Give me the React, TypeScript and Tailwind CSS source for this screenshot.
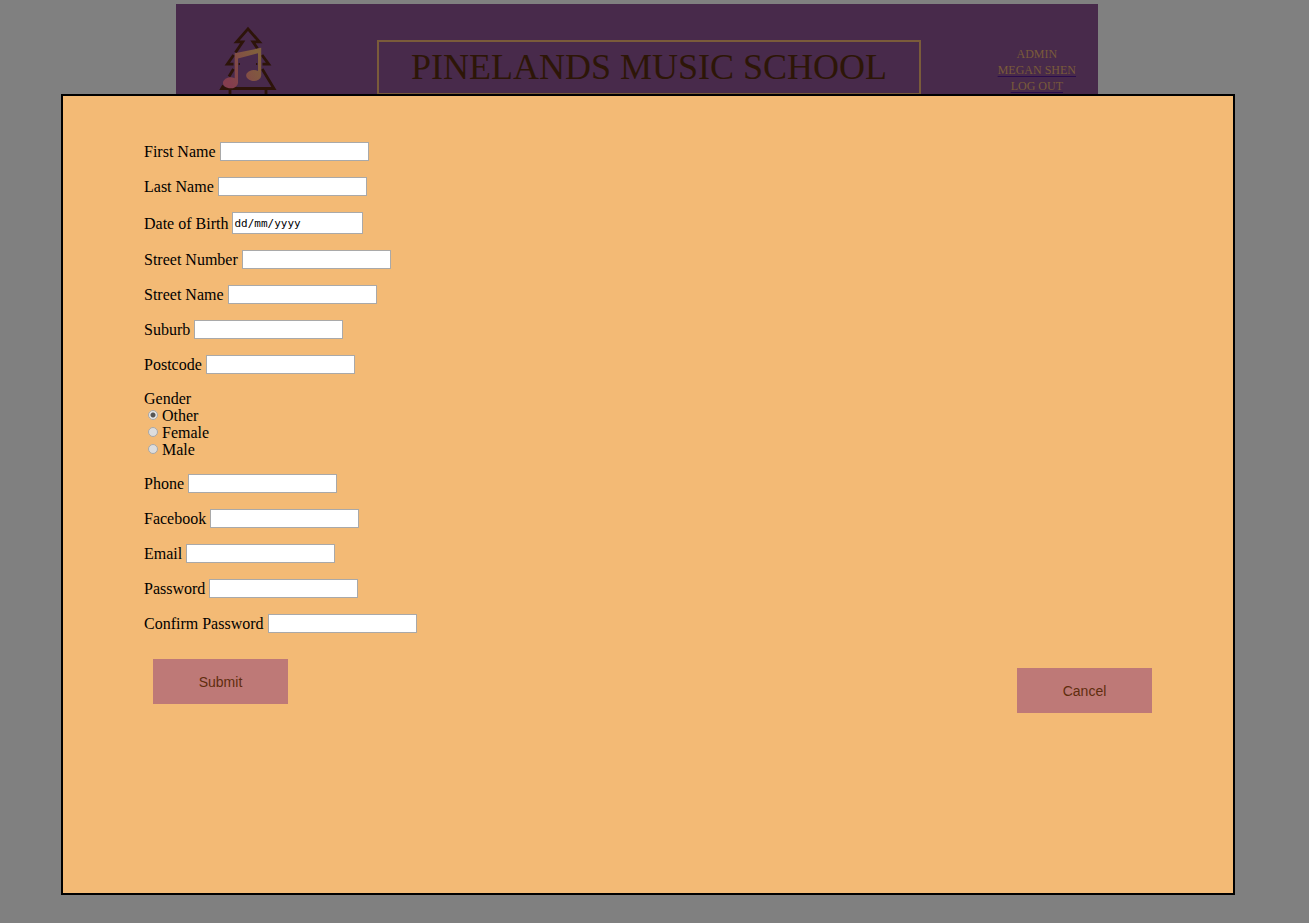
import React from "react";

const addressFields = ["Street Number", "Street Name", "Suburb", "Postcode"];
const accountFields = ["Phone", "Facebook", "Email", "Password", "Confirm Password"];
const genders = ["Other", "Female", "Male"];

function Field({ label }: { label: string }) {
  const id = label.toLowerCase().replace(/ /g, "-");
  return (
    <div className="flex h-[19px] items-center gap-1">
      <label htmlFor={id}>{label}</label>
      <input
        id={id}
        type={label.includes("Password") ? "password" : "text"}
        className="h-full w-[149px] border border-[#a9a9a9] bg-white px-0.5 text-xs"
      />
    </div>
  );
}

function Logo() {
  return (
    <svg className="h-20 w-[58px] shrink-0" viewBox="0 0 58 80" fill="none" aria-hidden="true">
      <defs>
        <linearGradient id="note" gradientUnits="userSpaceOnUse" x1="8" y1="52" x2="42" y2="34">
          <stop offset="0" stopColor="#843d4e" />
          <stop offset="1" stopColor="#80603c" />
        </linearGradient>
      </defs>
      <g stroke="#2d1409" strokeWidth="2.8">
        <path d="M16.5 26.5 23.7 15.9H17.6L29 2.9 40.4 15.9H34L38.5 22.5" />
        <path d="M14.7 29 8.3 38.2H14.5M43 29 49.7 38.2H43.5" />
        <path d="M14.5 43 10 50.5M43.2 43 55 62.5H2.7L4.5 59.5M11 63V80M47 63V80" />
      </g>
      <path
        fill="url(#note)"
        d="M15.7 27.3 42.2 21.8V49.5A7.5 5.5 0 1 1 39 45V27.2L19 32.5V57A7.5 5.5 0 1 1 15.7 52.3Z"
      />
      <path fill="#2d1409" d="M19.7 37h1.3v2h-1.3zM37 37h1.3v2h-1.3z" />
    </svg>
  );
}

export default function App() {
  return (
    <div className="min-h-screen bg-[#808080] pt-1 pr-[211px] pl-[176px] font-['Liberation_Serif',serif]">
      <header className="flex h-[130px] items-start bg-[#482a4b] pr-[22px] pl-[43px]">
        <div className="pt-[22px]">
          <Logo />
        </div>
        <h1 className="mt-9 ml-[100px] h-[55px] border-2 border-[#7a5b3a] px-8 text-center text-[36px] leading-[50px] whitespace-nowrap text-[#2d1607]">
          PINELANDS MUSIC SCHOOL
        </h1>
        <nav className="mt-[42px] ml-auto flex flex-col items-center text-xs leading-4 whitespace-nowrap text-[#7a5b3a]">
          <span>ADMIN</span>
          <a href="#profile" className="underline decoration-[#2a0d4c] underline-offset-2">
            MEGAN SHEN
          </a>
          <a href="#logout" className="underline decoration-[#2a0d4c] underline-offset-2">
            LOG OUT
          </a>
        </nav>
      </header>

      <div
        role="dialog"
        aria-label="Student details"
        className="absolute top-[94px] right-[74px] left-[61px] min-h-[calc(100vh-122px)] border-2 border-black bg-[#f3ba75] px-[81px] pt-[46px] text-base leading-[17px] text-black"
      >
        <form onSubmit={(e) => e.preventDefault()}>
          <div className="flex flex-col gap-4">
            <Field label="First Name" />
            <Field label="Last Name" />
            <div className="flex h-[22px] items-center gap-1">
              <label htmlFor="dob">Date of Birth</label>
              <input
                id="dob"
                type="text"
                placeholder="dd/mm/yyyy"
                className="h-full w-[131px] border border-[#a9a9a9] bg-white px-px font-['DejaVu_Sans_Mono',monospace] text-[11px] placeholder:text-black"
              />
            </div>
            {addressFields.map((label) => (
              <Field key={label} label={label} />
            ))}
            <fieldset>
              <legend>Gender</legend>
              {genders.map((gender) => (
                <label key={gender} className="flex h-[17px] items-center gap-1 pl-1">
                  <input
                    type="radio"
                    name="gender"
                    defaultChecked={gender === "Other"}
                    className="mb-0.5 size-[10px] appearance-none rounded-full border border-[#a8a8a8] bg-[#dddddd] checked:bg-[radial-gradient(circle,#555_2px,#e6e6e6_3px)]"
                  />
                  {gender}
                </label>
              ))}
            </fieldset>
            {accountFields.map((label) => (
              <Field key={label} label={label} />
            ))}
          </div>
          <div className="mt-[26px] flex items-start justify-between pl-[9px] font-['Liberation_Sans',sans-serif] text-sm text-[#602d0e]">
            <button type="submit" className="h-[45px] w-[135px] bg-[#be7977]">
              Submit
            </button>
            <button type="button" className="mt-[9px] h-[45px] w-[135px] bg-[#be7977]">
              Cancel
            </button>
          </div>
        </form>
      </div>
    </div>
  );
}
